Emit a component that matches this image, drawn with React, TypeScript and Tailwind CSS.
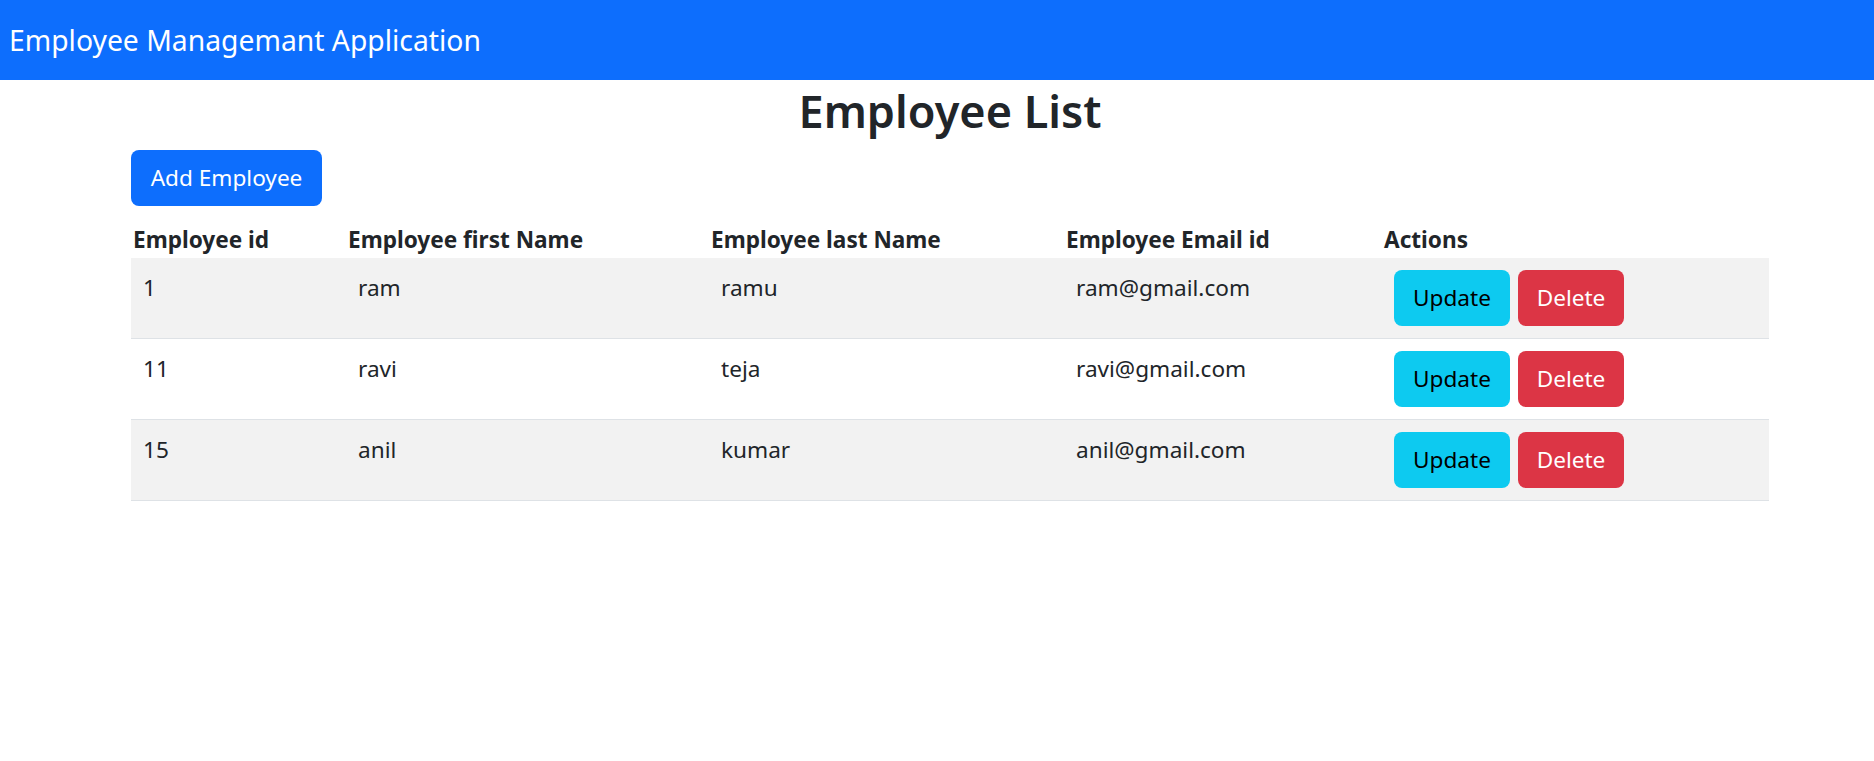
import React from "react";

type Emp = { id: number; first: string; last: string; email: string };

const employees: Emp[] = [
  { id: 1, first: "ram", last: "ramu", email: "ram@gmail.com" },
  { id: 11, first: "ravi", last: "teja", email: "ravi@gmail.com" },
  { id: 15, first: "anil", last: "kumar", email: "anil@gmail.com" },
];

const cols = "grid grid-cols-[215px_363px_355px_318px_387px]";

export default function App() {
  return (
    <div className="min-h-[761px] bg-white font-['Noto_Sans','Open_Sans',sans-serif] text-[#212529]">
      <nav className="flex h-[80px] items-center bg-[#0d6efd] px-[9px]">
        <span className="text-[28.3px] leading-[45px] text-white">Employee Managemant Application</span>
      </nav>
      <div className="ml-[131px] w-[1638px]">
        <h2 className="mt-[2px] mb-[11px] text-center text-[45px] font-semibold leading-[57px]">Employee List</h2>
        <button className="h-[56px] w-[191px] rounded-[8px] bg-[#0d6efd] text-[22.6px] leading-[36px] text-white">
          Add Employee
        </button>
        <div className={`${cols} mt-[16px] pl-[2px] text-[22.6px] font-bold leading-[36px]`}>
          <div>Employee id</div>
          <div>Employee first Name</div>
          <div>Employee last Name</div>
          <div>Employee Email id</div>
          <div>Actions</div>
        </div>
        <div className="text-[22.6px] leading-[36px]">
          {employees.map((e, i) => (
            <div
              key={e.id}
              className={`${cols} h-[81px] border-b border-[#dee2e6] ${i % 2 === 0 ? "bg-[#f2f2f2]" : "bg-white"}`}
            >
              <div className="px-[12px] pt-[12px]">{e.id}</div>
              <div className="px-[12px] pt-[12px]">{e.first}</div>
              <div className="px-[12px] pt-[12px]">{e.last}</div>
              <div className="px-[12px] pt-[12px]">{e.email}</div>
              <div className="flex gap-[8px] px-[12px] pt-[12px]">
                <button className="h-[56px] w-[116px] rounded-[8px] bg-[#0dcaf0] text-[22.6px] text-black">Update</button>
                <button className="h-[56px] w-[106px] rounded-[8px] bg-[#dc3545] text-[22.6px] text-white">Delete</button>
              </div>
            </div>
          ))}
        </div>
      </div>
    </div>
  );
}
